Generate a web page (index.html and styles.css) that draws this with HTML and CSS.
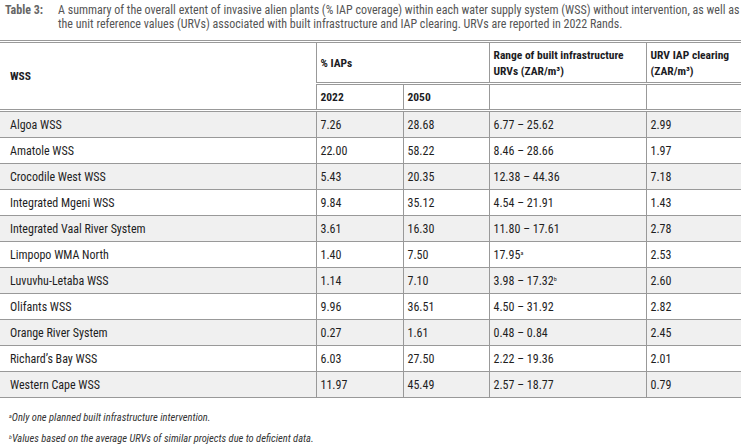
FILE: index.html
```html
<!DOCTYPE html>
<html lang="en">
<head>
<meta charset="utf-8">
<title>Table 3</title>
<link rel="stylesheet" href="styles.css">
</head>
<body>
<div class="page">
  <div class="caption">
    <span class="label">Table 3:</span>
    <span class="text">A summary of the overall extent of invasive alien plants (% IAP coverage) within each water supply system (WSS) without intervention, as well as the unit reference values (URVs) associated with built infrastructure and IAP clearing. URVs are reported in 2022 Rands.</span>
  </div>
  <table class="data">
    <colgroup>
      <col class="c-wss"><col class="c-y1"><col class="c-y2"><col class="c-range"><col class="c-urv">
    </colgroup>
    <thead>
      <tr class="h1">
        <th rowspan="2" class="first">WSS</th>
        <th colspan="2">% IAPs</th>
        <th>Range of built infrastructure URVs (ZAR/m³)</th>
        <th>URV IAP clearing (ZAR/m³)</th>
      </tr>
      <tr class="h2">
        <th>2022</th>
        <th>2050</th>
        <th></th>
        <th></th>
      </tr>
    </thead>
    <tbody>
      <tr><td class="first">Algoa WSS</td><td>7.26</td><td>28.68</td><td>6.77 – 25.62</td><td>2.99</td></tr>
      <tr><td class="first">Amatole WSS</td><td>22.00</td><td>58.22</td><td>8.46 – 28.66</td><td>1.97</td></tr>
      <tr><td class="first">Crocodile West WSS</td><td>5.43</td><td>20.35</td><td>12.38 – 44.36</td><td>7.18</td></tr>
      <tr><td class="first">Integrated Mgeni WSS</td><td>9.84</td><td>35.12</td><td>4.54 – 21.91</td><td>1.43</td></tr>
      <tr><td class="first">Integrated Vaal River System</td><td>3.61</td><td>16.30</td><td>11.80 – 17.61</td><td>2.78</td></tr>
      <tr><td class="first">Limpopo WMA North</td><td>1.40</td><td>7.50</td><td>17.95<sup>a</sup></td><td>2.53</td></tr>
      <tr><td class="first">Luvuvhu-Letaba WSS</td><td>1.14</td><td>7.10</td><td>3.98 – 17.32<sup>b</sup></td><td>2.60</td></tr>
      <tr><td class="first">Olifants WSS</td><td>9.96</td><td>36.51</td><td>4.50 – 31.92</td><td>2.82</td></tr>
      <tr><td class="first">Orange River System</td><td>0.27</td><td>1.61</td><td>0.48 – 0.84</td><td>2.45</td></tr>
      <tr><td class="first">Richard’s Bay WSS</td><td>6.03</td><td>27.50</td><td>2.22 – 19.36</td><td>2.01</td></tr>
      <tr><td class="first">Western Cape WSS</td><td>11.97</td><td>45.49</td><td>2.57 – 18.77</td><td>0.79</td></tr>
    </tbody>
  </table>
  <div class="notes">
    <p class="note"><sup>a</sup>Only one planned built infrastructure intervention.</p>
    <p class="note"><sup>b</sup>Values based on the average URVs of similar projects due to deficient data.</p>
  </div>
</div>
</body>
</html>
```
FILE: styles.css
```css
html, body {
  margin: 0;
  padding: 0;
  background: #ffffff;
}
body {
  font-family: "Liberation Sans Narrow", "Roboto Condensed", "DejaVu Sans Condensed", "Liberation Sans", sans-serif;
  font-size: 12px;
  color: #1e1e1e;
}
.page {
  width: 749px;
}
.caption {
  display: flex;
  padding-top: 3px;
  line-height: 14px;
  color: #555555;
}
.caption .label {
  flex: 0 0 58px;
  padding-left: 5px;
  box-sizing: border-box;
  font-weight: bold;
  color: #666666;
}
.caption .text {
  flex: 1;
  padding-right: 6px;
}
.data {
  margin-top: 9px;
  width: 741px;
  border-collapse: collapse;
  table-layout: fixed;
  border-top: 3px double #999999;
}
.c-wss { width: 316px; }
.c-y1 { width: 87px; }
.c-y2 { width: 86px; }
.c-range { width: 157px; }
.c-urv { width: 95px; }
.data th,
.data td {
  text-align: left;
  padding: 0 4px;
  border-left: 1px solid #999999;
}
.data th.first,
.data td.first {
  border-left: none;
  padding-left: 10px;
}
.data th {
  font-size: 11.5px;
  font-weight: bold;
  color: #1c1c24;
  line-height: 16px;
  border-bottom: 3px double #999999;
  vertical-align: middle;
}
.data tr.h1 th { height: 39px; }
.data tr.h2 th { height: 24px; }
.data td {
  height: 25px;
  border-bottom: 1px solid #999999;
  vertical-align: middle;
}
.data tbody tr:nth-child(odd) td {
  background: #f0f0f0;
}
.data sup {
  font-size: 6px;
  vertical-align: 4px;
  line-height: 0;
}
.notes {
  display: flex;
  flex-direction: column;
  gap: 7px;
  padding-top: 13px;
  padding-left: 9px;
}
.note {
  margin: 0;
  font-style: italic;
  font-size: 10.5px;
  line-height: 14px;
  color: #333333;
}
.note sup {
  font-size: 6px;
  vertical-align: 3px;
  line-height: 0;
}
```
